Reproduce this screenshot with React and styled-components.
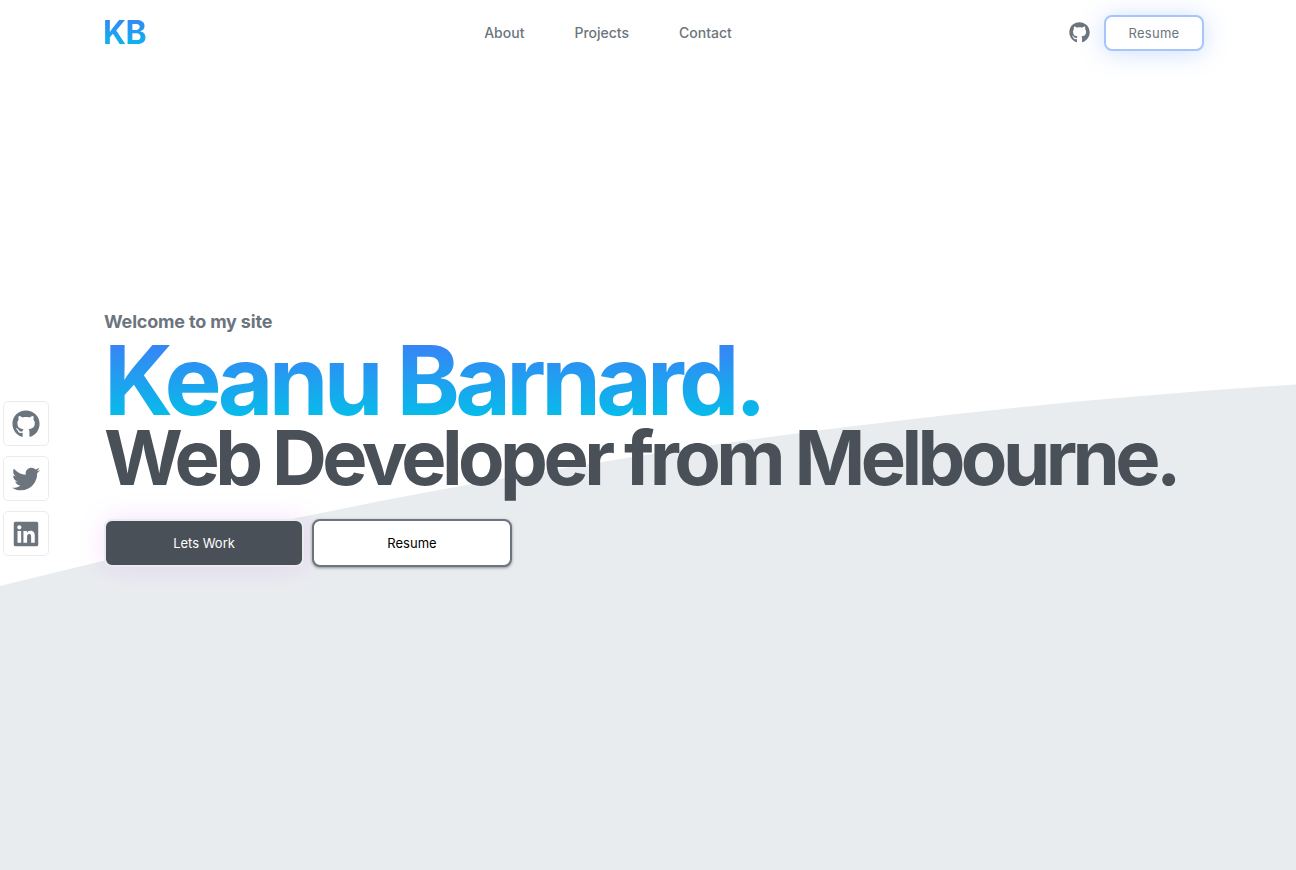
import React from "react";
import styled, { createGlobalStyle, css } from "styled-components";
import { FaGithub, FaTwitter, FaLinkedin } from "react-icons/fa";

const GlobalStyle = createGlobalStyle`
  *, *::before, *::after { box-sizing: border-box; }
  body {
    margin: 0;
    background: #ffffff;
    color: #6c757d;
    font-family: Inter, "Liberation Sans", sans-serif;
  }
`;

const gradientText = css`
  background: linear-gradient(180deg, #3f7cf7 0%, #00c3e8 100%);
  background-clip: text;
  -webkit-background-clip: text;
  color: transparent;
`;

const Page = styled.div`
  position: relative;
  isolation: isolate;
  min-height: 100vh;
  overflow: hidden;
`;

const Wave = styled.svg`
  position: absolute;
  inset: 0;
  z-index: -1;
  width: 100%;
  height: 100%;
`;

const Header = styled.header`
  display: grid;
  grid-template-columns: 1fr auto 1fr;
  align-items: center;
  height: 66px;
  padding: 0 92px 0 103px;
`;

const Logo = styled.a`
  ${gradientText}
  justify-self: start;
  font-size: 32px;
  font-weight: 700;
  line-height: 40px;
  letter-spacing: -0.02em;
  text-decoration: none;
`;

const Nav = styled.nav`
  display: flex;
  gap: 50px;
  margin-right: 91px;
`;

const NavLink = styled.a`
  color: #6c757d;
  font-size: 14px;
  font-weight: 500;
  line-height: 20px;
  text-decoration: none;
`;

const Actions = styled.div`
  display: flex;
  align-items: center;
  justify-content: flex-end;
  gap: 14px;
`;

const IconLink = styled.a`
  display: flex;
  padding-bottom: 2px;
  color: #6c757d;
  font-size: 21px;
`;

const Button = styled.button`
  width: 200px;
  height: 48px;
  padding: 0;
  border: 2px solid #6c757d;
  border-radius: 8px;
  background: #ffffff;
  color: #000000;
  font: 400 13px/16px Inter, "Liberation Sans", sans-serif;
  box-shadow: 0 1px 3px rgba(73, 80, 87, 0.6);
  cursor: pointer;
`;

const PrimaryButton = styled(Button)`
  border-color: #e9ecef;
  background: #495057;
  color: #ffffff;
  box-shadow: 0 0 26px rgba(210, 100, 250, 0.2);
`;

const OutlineButton = styled(Button)`
  width: 100px;
  height: 36px;
  border-color: #a5c5fb;
  color: #6c757d;
  letter-spacing: 0.02em;
  box-shadow: 0 2px 24px rgba(59, 130, 246, 0.25);
`;

const Hero = styled.main`
  display: grid;
  grid-template-columns: 101px 1fr;
  align-items: start;
  padding: 244px 92px 100px 3px;
`;

const Rail = styled.aside`
  display: flex;
  flex-direction: column;
  align-items: flex-start;
  gap: 10px;
  padding-top: 91px;
`;

const RailLink = styled.a`
  display: grid;
  place-items: center;
  width: 46px;
  height: 45px;
  border: 1px solid #e9ecef;
  border-radius: 5px;
  background: #ffffff;
  color: #6c757d;
  font-size: 28px;
`;

const Intro = styled.section`
  display: flex;
  flex-direction: column;
  align-items: flex-start;
`;

const Welcome = styled.p`
  margin: 0;
  font-size: 18px;
  font-weight: 700;
  line-height: 24px;
  letter-spacing: -0.01em;
`;

const Name = styled.h1`
  ${gradientText}
  margin: 0;
  font-size: 96px;
  font-weight: 700;
  line-height: 92px;
  letter-spacing: -0.05em;
`;

const Role = styled.h2`
  margin: 0;
  color: #495057;
  font-size: 76px;
  font-weight: 700;
  line-height: 62px;
  letter-spacing: -0.06em;
`;

const ButtonRow = styled.div`
  display: flex;
  gap: 8px;
  margin-top: 31px;
`;

const navItems = ["About", "Projects", "Contact"];

const socials = [
  { label: "GitHub", Icon: FaGithub },
  { label: "Twitter", Icon: FaTwitter },
  { label: "LinkedIn", Icon: FaLinkedin },
];

export default function App() {
  return (
    <Page>
      <GlobalStyle />
      <Wave viewBox="0 0 1296 870" preserveAspectRatio="none" aria-hidden="true">
        <path d="M0 586C432 477 864 412 1296 384.500V870H0Z" fill="#e9ecef" />
      </Wave>
      <Header>
        <Logo href="#home">KB</Logo>
        <Nav>
          {navItems.map((item) => (
            <NavLink key={item} href={`#${item.toLowerCase()}`}>
              {item}
            </NavLink>
          ))}
        </Nav>
        <Actions>
          <IconLink href="#github" aria-label="GitHub">
            <FaGithub />
          </IconLink>
          <OutlineButton type="button">Resume</OutlineButton>
        </Actions>
      </Header>
      <Hero>
        <Rail>
          {socials.map(({ label, Icon }) => (
            <RailLink key={label} href={`#${label.toLowerCase()}`} aria-label={label}>
              <Icon />
            </RailLink>
          ))}
        </Rail>
        <Intro>
          <Welcome>Welcome to my site</Welcome>
          <Name>Keanu Barnard.</Name>
          <Role>Web Developer from Melbourne.</Role>
          <ButtonRow>
            <PrimaryButton type="button">Lets Work</PrimaryButton>
            <Button type="button">Resume</Button>
          </ButtonRow>
        </Intro>
      </Hero>
    </Page>
  );
}
